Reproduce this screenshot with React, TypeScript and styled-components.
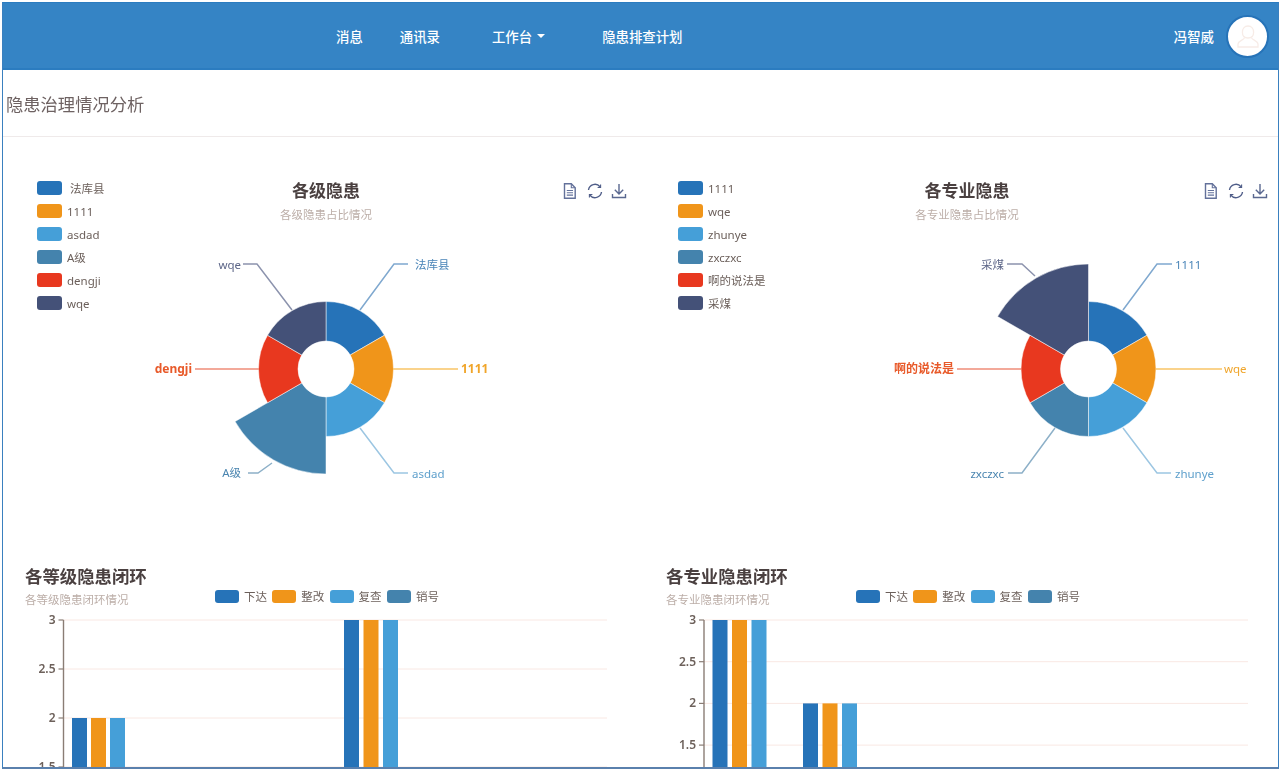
import React from "react";
import styled, { createGlobalStyle } from "styled-components";

const BLUE = "#2673b8";
const ORANGE = "#f0951a";
const SKY = "#459fd8";
const TEAL = "#4483ad";
const RED = "#e8381f";
const NAVY = "#445178";
const SLICE_COLORS = [BLUE, ORANGE, SKY, TEAL, RED, NAVY];

const GlobalStyle = createGlobalStyle`
    html, body {
        margin: 0;
        padding: 0;
        background: #fff;
        overflow: hidden;
        font-family: "Noto Sans", "Noto Sans CJK SC", sans-serif;
    }
`;

const Frame = styled.div`
    box-sizing: border-box;
    width: 1277px;
    height: 767px;
    margin: 2px 2px 0;
    border: 1px solid #3a80bf;
    border-bottom: 2px solid #5a80ad;
    border-top-color: #2b7cc0;
    overflow: hidden;
    display: flex;
    flex-direction: column;
    filter: blur(0.4px);
`;

const NavBar = styled.nav`
    box-sizing: border-box;
    flex: none;
    height: 67px;
    display: flex;
    align-items: center;
    padding: 0 9px 0 333px;
    background: #3584c5;
    border-bottom: 2px solid #2b7cc0;
    color: #fff;
    font-size: 13.4px;
    font-weight: 500;
`;

const NavItem = styled.a<{ $gap: number }>`
    display: flex;
    align-items: center;
    margin-right: ${(props) => props.$gap}px;
`;

const Caret = styled.span`
    width: 0;
    height: 0;
    margin-left: 5px;
    border-left: 4px solid transparent;
    border-right: 4px solid transparent;
    border-top: 4px solid #fff;
`;

const UserBox = styled.div`
    margin-left: auto;
    display: flex;
    align-items: center;
    gap: 12px;
`;

const Avatar = styled.div`
    box-sizing: border-box;
    width: 43px;
    height: 43px;
    margin-top: 2px;
    border-radius: 50%;
    border: 2px solid #2673b8;
    background: #fff;
    display: flex;
    align-items: center;
    justify-content: center;
`;

const PageTitle = styled.div`
    box-sizing: border-box;
    flex: none;
    height: 67px;
    display: flex;
    align-items: center;
    padding-left: 3px;
    border-bottom: 1px solid #efeaea;
    color: #6e6262;
    font-size: 17.3px;
`;

const ChartGrid = styled.div`
    display: grid;
    grid-template-columns: 634px 634px;
    column-gap: 7px;
`;

const Panel = styled.section`
    min-width: 0;
`;

const PieBlock = styled.div`
    display: grid;
    grid-template-columns: 110px 1fr;
    padding: 44px 0 0 34px;
    height: 309px;
`;

const Legend = styled.ul`
    list-style: none;
    margin: 0;
    padding: 0;
    display: flex;
    flex-direction: column;
    gap: 9px;
`;

const LegendRow = styled.li<{ $indent: number }>`
    display: flex;
    align-items: center;
    height: 14px;
    color: #6b5f5a;
    font-size: 11.5px;
    gap: ${(props) => props.$indent}px;
`;

const Swatch = styled.span<{ $color: string }>`
    flex: none;
    width: 25px;
    height: 14px;
    border-radius: 3px;
    background: ${(props) => props.$color};
`;

const PieColumn = styled.div`
    display: flex;
    flex-direction: column;
`;

const PieHeader = styled.div`
    height: 69px;
    display: grid;
    grid-template-columns: 358px 1fr auto;
    padding-right: 10px;
`;

const HeadText = styled.div<{ $centered?: boolean }>`
    text-align: ${(props) => (props.$centered ? "center" : "left")};
`;

const Title = styled.div<{ $size: number }>`
    height: 20px;
    line-height: 20px;
    color: #4a4040;
    font-size: ${(props) => props.$size}px;
    font-weight: 700;
`;

const SubTitle = styled.div`
    height: 16px;
    line-height: 16px;
    margin-top: 6px;
    color: #bcaea8;
    font-size: 11.5px;
`;

const Tools = styled.div`
    grid-column: 3;
    display: flex;
    gap: 8.5px;
    margin-top: 2px;
    height: 16px;
`;

const BarBlock = styled.div`
    display: flex;
    flex-direction: column;
    padding-top: 76px;
`;

const BarHeader = styled.div`
    display: flex;
    align-items: flex-end;
    height: 42px;
    margin-bottom: 4px;
    padding-left: 22px;
`;

const BarHeadText = styled(HeadText)`
    flex: none;
    width: 190px;
`;

const BarLegend = styled.ul`
    list-style: none;
    display: flex;
    margin: 0 0 5px;
    padding: 0;
`;

const BarLegendItem = styled.li`
    width: 57.3px;
    display: flex;
    align-items: center;
    gap: 5px;
    color: #6b5f5a;
    font-size: 11.5px;
    line-height: 13px;
`;

const BarSwatch = styled(Swatch)`
    width: 24px;
    height: 13px;
`;

const ChartSvg = styled.svg`
    display: block;
    flex: none;
`;

function polar(cx: number, cy: number, r: number, deg: number) {
    const a = (deg * Math.PI) / 180;
    return [cx + r * Math.sin(a), cy - r * Math.cos(a)];
}

function slicePath(cx: number, cy: number, inner: number, outer: number, from: number, to: number) {
    const [x1, y1] = polar(cx, cy, outer, from);
    const [x2, y2] = polar(cx, cy, outer, to);
    const [x3, y3] = polar(cx, cy, inner, to);
    const [x4, y4] = polar(cx, cy, inner, from);
    return `M${x1} ${y1}A${outer} ${outer} 0 0 1 ${x2} ${y2}L${x3} ${y3}A${inner} ${inner} 0 0 0 ${x4} ${y4}Z`;
}

type PieLabel = {
    text: string;
    line: string;
    x: number;
    y: number;
    anchor: "start" | "end";
    color: string;
    lineColor: string;
    bold?: boolean;
};

type PieProps = {
    originX: number;
    cx: number;
    bigIndex: number;
    labels: PieLabel[];
};

function PieChart(props: PieProps) {
    const { originX, cx, bigIndex, labels } = props;
    return (
        <ChartSvg width={489} height={240} viewBox={`${originX} 250 489 240`}>
            {SLICE_COLORS.map((color, i) => (
                <path
                    key={color}
                    d={slicePath(cx, 369, 28, i === bigIndex ? 105 : 67.5, i * 60, (i + 1) * 60)}
                    fill={color}
                    stroke="#fff"
                    strokeWidth={0.5}
                />
            ))}
            {labels.map((label) => (
                <g key={label.text}>
                    <polyline points={label.line} fill="none" stroke={label.lineColor} strokeWidth={1.5} />
                    <text
                        x={label.x}
                        y={label.y}
                        textAnchor={label.anchor}
                        fill={label.color}
                        fontSize={label.bold ? 12 : 11.5}
                        fontWeight={label.bold ? 700 : 400}
                    >
                        {label.text}
                    </text>
                </g>
            ))}
        </ChartSvg>
    );
}

type BarGroup = { x: number[]; value: number };

type BarProps = {
    originX: number;
    width: number;
    axisX: number;
    gridEnd: number;
    step: number;
    ticks: string[];
    groups: BarGroup[];
};

function BarChart(props: BarProps) {
    const { originX, width, axisX, gridEnd, step, ticks, groups } = props;
    return (
        <ChartSvg width={width} height={160} viewBox={`${originX} 612 ${width} 160`}>
            {ticks.map((tick, i) => {
                const y = 620 + i * step;
                return (
                    <g key={tick}>
                        <line x1={axisX} x2={gridEnd} y1={y} y2={y} stroke="#f9e8e3" strokeWidth={1} />
                        <line x1={axisX - 5} x2={axisX} y1={y} y2={y} stroke="#8a7d75" strokeWidth={1.2} />
                        <text x={axisX - 8} y={y + 4} textAnchor="end" fill="#6d615b" fontSize={12} fontWeight={600}>
                            {tick}
                        </text>
                    </g>
                );
            })}
            <line x1={axisX} x2={axisX} y1={620} y2={772} stroke="#8a7d75" strokeWidth={1.4} />
            {groups.map((group) =>
                group.x.map((x, i) => {
                    const top = 620 + (3 - group.value) * 2 * step;
                    return <rect key={x} x={x} y={top} width={15} height={772 - top} fill={SLICE_COLORS[i]} />;
                })
            )}
        </ChartSvg>
    );
}

function DocIcon() {
    return (
        <svg width={16} height={16} viewBox="0 0 16 16" fill="none" stroke="#63719a" strokeWidth={1.4}>
            <path d="M2.500 .8h6.800L13.200 4.700V15.200H2.500z" />
            <path d="M9.300 .8v3.900h3.900M4.800 7.500h6.200M4.800 9.800h6.200M4.800 12.100h6.200" strokeWidth={1.1} />
        </svg>
    );
}

function RestoreIcon() {
    return (
        <svg width={16} height={16} viewBox="0 0 16 16" fill="none" stroke="#4f5d88" strokeWidth={1.4}>
            <path d="M1.500 7A6.500 6.500 0 0 1 13 3.800" />
            <path d="M14.500 9A6.500 6.500 0 0 1 3 12.200" />
            <path d="M13.600 1.500v3h-3" strokeWidth={1.1} />
            <path d="M2.400 14.500v-3h3" strokeWidth={1.1} />
        </svg>
    );
}

function SaveIcon() {
    return (
        <svg width={16} height={16} viewBox="0 0 16 16" fill="none" stroke="#5a6890" strokeWidth={1.4}>
            <path d="M8 1v9.500M3.800 6.800 8 11l4.200-4.200" />
            <path d="M1.500 11v3.500h13V11" />
        </svg>
    );
}

function PersonIcon() {
    return (
        <svg width={24} height={26} viewBox="0 0 24 26" fill="none" stroke="#f7ece7" strokeWidth={1.3}>
            <path d="M12 2c3.600 0 5.600 2.800 5.600 6.200 0 3-1.700 5.800-5.600 5.800s-5.600-2.800-5.600-5.800C6.400 4.800 8.400 2 12 2z" />
            <path d="M8.600 13.500c-.3 2.500-6.100 3-6.600 6.500v3h20v-3c-.5-3.500-6.300-4-6.600-6.500" />
        </svg>
    );
}

type PieSectionProps = PieProps & {
    title: string;
    subTitle: string;
    legend: string[];
};

function PieSection(props: PieSectionProps) {
    const { title, subTitle, legend, ...pie } = props;
    return (
        <PieBlock>
            <Legend>
                {legend.map((name, i) => (
                    <LegendRow key={name} $indent={i === 0 && pie.bigIndex === 3 ? 8 : 5}>
                        <Swatch $color={SLICE_COLORS[i]} />
                        {name}
                    </LegendRow>
                ))}
            </Legend>
            <PieColumn>
                <PieHeader>
                    <HeadText $centered>
                        <Title $size={17}>{title}</Title>
                        <SubTitle>{subTitle}</SubTitle>
                    </HeadText>
                    <Tools>
                        <DocIcon />
                        <RestoreIcon />
                        <SaveIcon />
                    </Tools>
                </PieHeader>
                <PieChart {...pie} />
            </PieColumn>
        </PieBlock>
    );
}

type BarSectionProps = BarProps & {
    title: string;
    subTitle: string;
};

function BarSection(props: BarSectionProps) {
    const { title, subTitle, ...bars } = props;
    return (
        <BarBlock>
            <BarHeader>
                <BarHeadText>
                    <Title $size={17.4}>{title}</Title>
                    <SubTitle>{subTitle}</SubTitle>
                </BarHeadText>
                <BarLegend>
                    {["下达", "整改", "复查", "销号"].map((name, i) => (
                        <BarLegendItem key={name}>
                            <BarSwatch $color={SLICE_COLORS[i]} />
                            {name}
                        </BarLegendItem>
                    ))}
                </BarLegend>
            </BarHeader>
            <BarChart {...bars} />
        </BarBlock>
    );
}

const leftLabels: PieLabel[] = [
    { text: "法库县", line: "360,310 394,264 408,264", x: 415, y: 269, anchor: "start", color: "#4a85b8", lineColor: "#7fa8cf" },
    { text: "1111", line: "393,369 458,369", x: 461, y: 373, anchor: "start", color: "#f0a52a", lineColor: "#f8c566", bold: true },
    { text: "asdad", line: "360,428 394,473 408,473", x: 412, y: 478, anchor: "start", color: "#5fa0cc", lineColor: "#9cc6e2" },
    { text: "A级", line: "272,463 258,473 248,473", x: 241, y: 477, anchor: "end", color: "#4a85b0", lineColor: "#8db0c8" },
    { text: "dengji", line: "259,369 195,369", x: 192, y: 373, anchor: "end", color: "#e85a2a", lineColor: "#ef8d78", bold: true },
    { text: "wqe", line: "292,310 257,264 243,264", x: 241, y: 269, anchor: "end", color: "#5d6688", lineColor: "#8c93ad" },
];

const rightLabels: PieLabel[] = [
    { text: "1111", line: "1123,310 1157,264 1172,264", x: 1175, y: 269, anchor: "start", color: "#4a85b8", lineColor: "#7fa8cf" },
    { text: "wqe", line: "1156,369 1222,369", x: 1224, y: 373, anchor: "start", color: "#f0a52a", lineColor: "#f8c566" },
    { text: "zhunye", line: "1123,428 1157,473 1171,473", x: 1175, y: 478, anchor: "start", color: "#5fa0cc", lineColor: "#9cc6e2" },
    { text: "zxczxc", line: "1055,428 1022,473 1008,473", x: 1004, y: 478, anchor: "end", color: "#4a85b0", lineColor: "#8db0c8" },
    { text: "啊的说法是", line: "1021,369 957,369", x: 954, y: 373, anchor: "end", color: "#e85a2a", lineColor: "#ef8d78", bold: true },
    { text: "采煤", line: "1035,276 1022,264 1007,264", x: 1004, y: 269, anchor: "end", color: "#5d6688", lineColor: "#8c93ad" },
];

export default function App() {
    return (
        <>
            <GlobalStyle />
            <Frame>
                <NavBar>
                    <NavItem $gap={37}>消息</NavItem>
                    <NavItem $gap={52}>通讯录</NavItem>
                    <NavItem $gap={57}>
                        工作台
                        <Caret />
                    </NavItem>
                    <NavItem $gap={0}>隐患排查计划</NavItem>
                    <UserBox>
                        <span>冯智威</span>
                        <Avatar>
                            <PersonIcon />
                        </Avatar>
                    </UserBox>
                </NavBar>
                <PageTitle>隐患治理情况分析</PageTitle>
                <ChartGrid>
                    <Panel>
                        <PieSection
                            title="各级隐患"
                            subTitle="各级隐患占比情况"
                            legend={["法库县", "1111", "asdad", "A级", "dengji", "wqe"]}
                            originX={147}
                            cx={326}
                            bigIndex={3}
                            labels={leftLabels}
                        />
                        <BarSection
                            title="各等级隐患闭环"
                            subTitle="各等级隐患闭环情况"
                            originX={3}
                            width={634}
                            axisX={63.5}
                            gridEnd={607}
                            step={49}
                            ticks={["3", "2.5", "2", "1.5"]}
                            groups={[
                                { x: [72, 91, 110], value: 2 },
                                { x: [344, 363.5, 383], value: 3 },
                            ]}
                        />
                    </Panel>
                    <Panel>
                        <PieSection
                            title="各专业隐患"
                            subTitle="各专业隐患占比情况"
                            legend={["1111", "wqe", "zhunye", "zxczxc", "啊的说法是", "采煤"]}
                            originX={788}
                            cx={1088.5}
                            bigIndex={5}
                            labels={rightLabels}
                        />
                        <BarSection
                            title="各专业隐患闭环"
                            subTitle="各专业隐患闭环情况"
                            originX={644}
                            width={634}
                            axisX={704}
                            gridEnd={1248}
                            step={41.7}
                            ticks={["3", "2.5", "2", "1.5"]}
                            groups={[
                                { x: [712.5, 732, 751.5], value: 3 },
                                { x: [803, 822.5, 842], value: 2 },
                            ]}
                        />
                    </Panel>
                </ChartGrid>
            </Frame>
        </>
    );
}
